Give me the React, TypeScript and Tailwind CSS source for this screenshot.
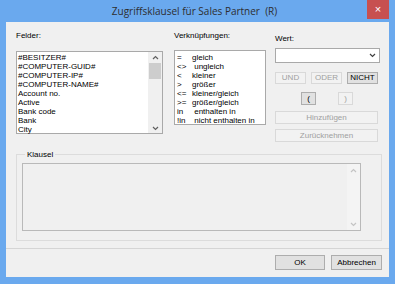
import React from "react";

const felder = [
  "#BESITZER#",
  "#COMPUTER-GUID#",
  "#COMPUTER-IP#",
  "#COMPUTER-NAME#",
  "Account no.",
  "Active",
  "Bank code",
  "Bank",
  "City",
];

const ops: [string, string][] = [
  ["=", "gleich"],
  ["<>", " ungleich"],
  ["<", "kleiner"],
  [">", "größer"],
  ["<=", "kleiner/gleich"],
  [">=", "größer/gleich"],
  ["in", " enthalten in"],
  ["!in", " nicht enthalten in"],
];

function Chevron({ up, color = "#606060" }: { up?: boolean; color?: string }) {
  return (
    <svg width="7" height="5" viewBox="0 0 7 5">
      <polyline
        points={up ? "1,4 3.5,1.5 6,4" : "1,1 3.5,3.5 6,1"}
        fill="none"
        stroke={color}
        strokeWidth="1.2"
      />
    </svg>
  );
}

function Btn({
  label,
  enabled,
  className,
}: {
  label: string;
  enabled?: boolean;
  className?: string;
}) {
  return (
    <div
      className={`flex items-center justify-center border text-[8px] leading-none ${
        enabled
          ? "border-[#adadad] bg-[#e1e1e1] text-black"
          : "border-[#d9d9d9] bg-[#f2f2f2] text-[#a0a0a0]"
      } ${className ?? ""}`}
    >
      {label}
    </div>
  );
}

export default function App() {
  return (
    <div className="w-[395px] h-[284px] bg-[#6aa9ee] flex flex-col font-['Liberation_Sans',Arial,sans-serif]">
      {/* title bar */}
      <div className="h-[22px] flex">
        <div className="flex-1" />
        <div className="self-center whitespace-pre text-[10px] text-[#2e2e2e] font-['Open_Sans',sans-serif]">
          Zugriffsklausel für Sales Partner  (R)
        </div>
        <div className="flex-1 flex justify-end pr-[6px]">
          <div className="w-[22px] h-[19px] bg-[#c75050] flex items-center justify-center text-white text-[11px] leading-none">
            ×
          </div>
        </div>
      </div>

      {/* content */}
      <div className="mx-[6px] mb-[7px] flex-1 bg-[#f0f0f0] flex flex-col text-[8px] text-black">
        <div className="flex pt-[9px] pl-[10px]">
          {/* Felder */}
          <div className="w-[147px] flex flex-col">
            <div className="h-[9px] leading-[9px]">Felder:</div>
            <div className="mt-[11px] h-[83px] border border-[#a9a9a9] bg-white flex">
              <div className="flex-1 pt-[1px] pl-[1px] leading-[9px]">
                {felder.map((f) => (
                  <div key={f} className="h-[9px] whitespace-nowrap">
                    {f}
                  </div>
                ))}
              </div>
              <div className="w-[14px] bg-[#f0f0f0] flex flex-col items-center">
                <div className="h-[10px] flex items-center">
                  <Chevron up />
                </div>
                <div className="mt-[1px] w-[12px] h-[16px] bg-[#cdcdcd]" />
                <div className="flex-1" />
                <div className="h-[10px] flex items-center">
                  <Chevron />
                </div>
              </div>
            </div>
          </div>

          {/* Verknüpfungen */}
          <div className="ml-[11px] w-[92px] flex flex-col">
            <div className="h-[9px] leading-[9px]">Verknüpfungen:</div>
            <div className="mt-[10px] h-[75px] border border-[#a9a9a9] bg-white pt-[2px] pl-[2px] leading-[9px]">
              {ops.map(([o, t]) => (
                <div key={o} className="h-[9px] flex whitespace-pre">
                  <span className="w-[15px]">{o}</span>
                  <span>{t}</span>
                </div>
              ))}
            </div>
          </div>

          {/* Wert */}
          <div className="ml-[9px] w-[105px] flex flex-col">
            <div className="mt-[3px] h-[9px] leading-[9px]">Wert:</div>
            <div className="mt-[5px] h-[15px] border border-[#a9a9a9] bg-white flex items-center justify-end pr-[3px]">
              <Chevron color="#404040" />
            </div>
            <div className="mt-[9px] flex gap-[5px]">
              <Btn label="UND" className="w-[31px] h-[12px]" />
              <Btn label="ODER" className="w-[31px] h-[12px]" />
              <Btn label="NICHT" enabled className="w-[31px] h-[12px]" />
            </div>
            <div className="mt-[8px] flex pl-[26px] gap-[22px]">
              <Btn label="(" enabled className="w-[15px] h-[13px]" />
              <Btn label=")" className="w-[15px] h-[13px]" />
            </div>
            <Btn label="Hinzufügen" className="mt-[6px] w-[103px] h-[13px]" />
            <Btn label="Zurücknehmen" className="mt-[5px] w-[103px] h-[13px]" />
          </div>
        </div>

        {/* Klausel */}
        <fieldset className="mt-[8px] ml-[10px] mr-[7px] border border-[#dcdcdc] pl-[5px] pb-[9px]">
          <legend className="ml-[3px] px-[2px] h-[9px] leading-[9px]">Klausel</legend>
          <div className="mt-[4px] w-[339px] h-[68px] border border-[#b9b9b9] bg-[#f0f0f0] flex justify-end">
            <div className="w-[13px] bg-[#f4f4f4] flex flex-col items-center">
              <div className="h-[12px] flex items-center">
                <Chevron up color="#c4c4c4" />
              </div>
              <div className="flex-1" />
              <div className="h-[12px] flex items-center">
                <Chevron color="#c4c4c4" />
              </div>
            </div>
          </div>
        </fieldset>

        {/* footer */}
        <div className="mt-[7px] flex-1 border-t border-[#d5d5d5] pt-[6px] flex justify-end gap-[6px] pr-[7px]">
          <Btn label="OK" enabled className="w-[50px] h-[15px]" />
          <Btn label="Abbrechen" enabled className="w-[51px] h-[15px]" />
        </div>
      </div>
    </div>
  );
}
